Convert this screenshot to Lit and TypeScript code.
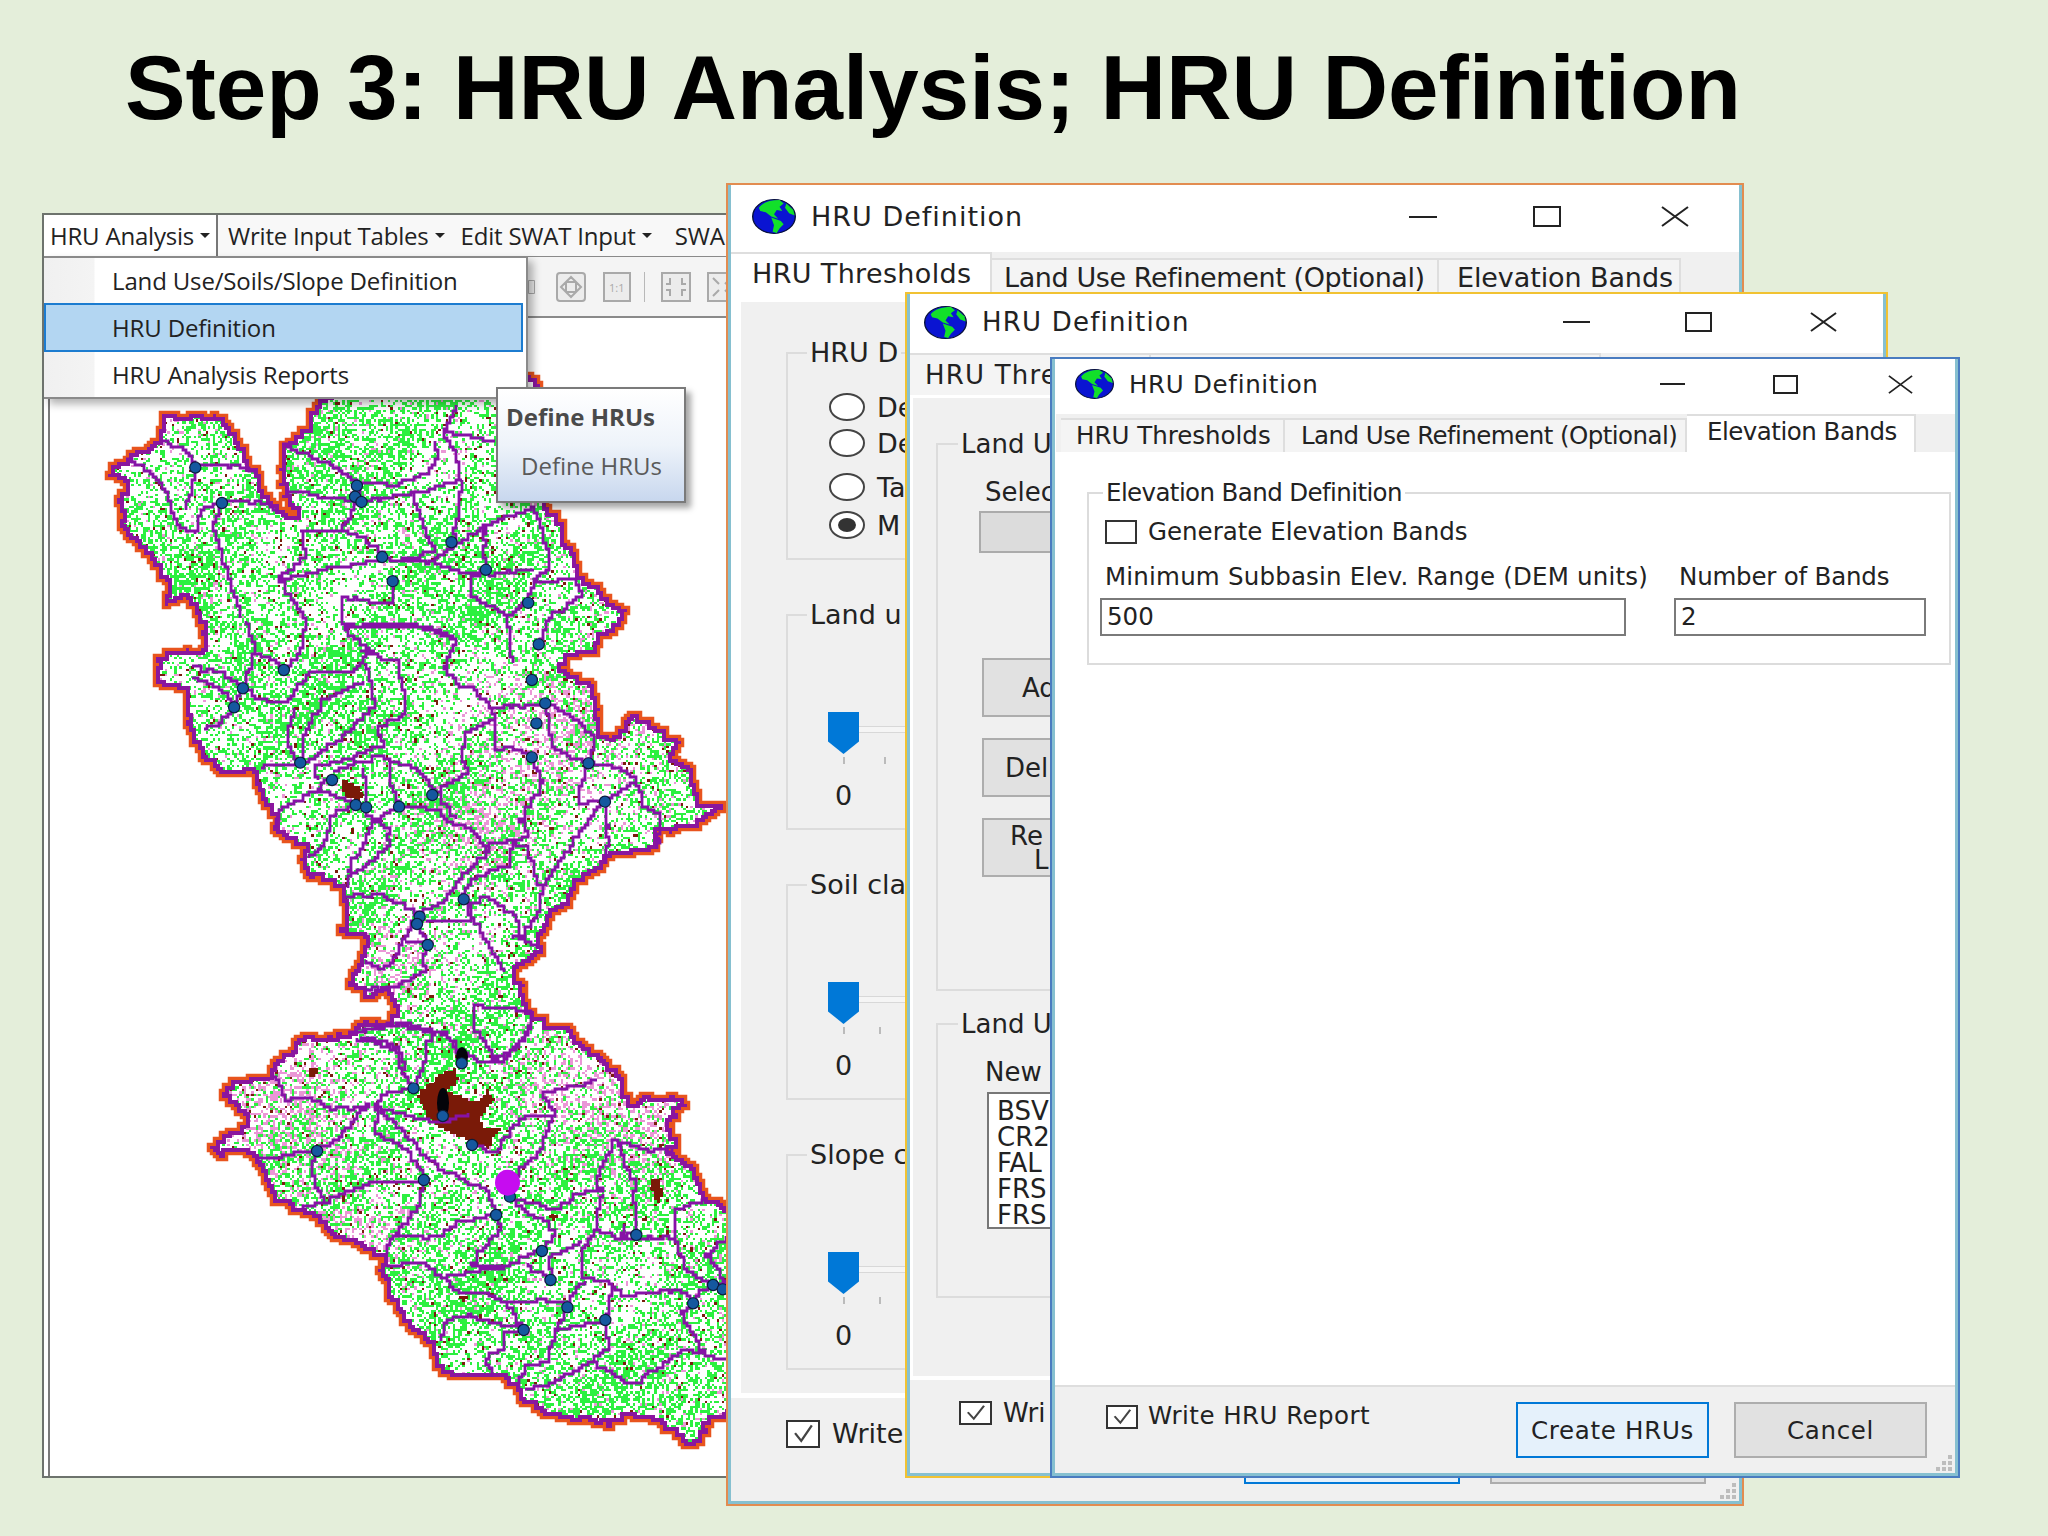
import { LitElement, html, css, svg } from 'lit';
import { customElement } from 'lit/decorators.js';

// map data was traced in three differently scaled crops: [originX, originY, scaleX, scaleY]
type Frame = [number, number, number, number];
const F1: Frame = [30, 180, 2.178, 2.904];
const F6: Frame = [200, 1020, 2.904, 3];
const F7: Frame = [130, 620, 2.613, 3];

const toPage = (f: Frame, flat: number[]) => {
  const out: number[][] = [];
  for (let i = 0; i < flat.length; i += 2) {
    out.push([f[0] + flat[i] / f[2], f[1] + flat[i + 1] / f[3]]);
  }
  return out;
};

let seed = 20483;
const rand = () => {
  seed = (seed + 0x6d2b79f5) | 0;
  let t = Math.imul(seed ^ (seed >>> 15), 1 | seed);
  t = (t + Math.imul(t ^ (t >>> 7), 61 | t)) ^ t;
  return ((t ^ (t >>> 14)) >>> 0) / 4294967296;
};

// raster-looking staircase line through the given points
const stair = (pts: number[][], g: number, jitter: number, close = false) => {
  const snap = (v: number) => Math.round(v / g) * g;
  let d = `M${snap(pts[0][0])} ${snap(pts[0][1])}`;
  const all = close ? [...pts, pts[0]] : pts;
  for (let i = 1; i < all.length; i++) {
    const [ax, ay] = all[i - 1];
    const [bx, by] = all[i];
    const n = Math.max(1, Math.ceil(Math.hypot(bx - ax, by - ay) / (g * 2)));
    for (let k = 1; k <= n; k++) {
      const t = k / n;
      const jx = k < n ? (rand() - 0.5) * jitter : 0;
      const jy = k < n ? (rand() - 0.5) * jitter : 0;
      d += `H${snap(ax + (bx - ax) * t + jx)}V${snap(ay + (by - ay) * t + jy)}`;
    }
  }
  return d + (close ? 'Z' : '');
};

const OUTLINE = [
  ...toPage(F1, [285, 680, 360, 680, 420, 690, 440, 730, 470, 810, 500, 860, 500, 900, 540, 960, 580, 975, 545, 880, 550, 770, 600, 720, 620, 650, 700, 560, 1090, 575, 1110, 600, 1125, 950, 1160, 1000, 1165, 1050, 1190, 1100, 1195, 1150, 1235, 1180, 1260, 1230, 1300, 1255]),
  ...toPage(F7, [1290, 0, 1270, 40, 1225, 60, 1220, 100, 1160, 110, 1130, 150, 1190, 185, 1215, 230, 1225, 330, 1250, 365, 1310, 280, 1380, 330, 1440, 370, 1420, 420, 1460, 440, 1480, 500, 1490, 550, 1550, 550, 1550, 570, 1490, 620, 1420, 640, 1380, 630, 1380, 690, 1260, 710, 1240, 735, 1170, 790, 1150, 860, 1110, 880, 1080, 950, 1080, 1000, 1010, 1060, 1035, 1130, 1040, 1170, 1090, 1215, 1150, 1230, 1190, 1280]),
  ...toPage(F6, [1180, 130, 1220, 170, 1250, 250, 1300, 225, 1390, 230, 1410, 260, 1360, 320, 1390, 375, 1360, 400, 1430, 440, 1470, 530, 1530, 570, 1600, 570, 1600, 1180, 1530, 1185, 1490, 1200, 1440, 1275, 1400, 1260, 1340, 1210, 1240, 1190, 1200, 1220, 1130, 1200, 1040, 1190, 990, 1170, 930, 1130, 920, 1100, 850, 1070, 750, 1070, 690, 1040, 660, 960, 600, 915, 590, 880, 550, 840, 540, 780, 515, 745, 530, 710, 450, 670, 380, 640, 340, 590, 270, 575, 210, 520, 175, 440, 120, 390, 70, 410, 25, 375, 60, 340, 130, 320, 135, 290, 60, 215, 90, 180, 175, 170, 205, 180, 205, 140, 260, 90, 280, 50, 430, 40, 460, 10, 540, 5]),
  ...toPage(F7, [680, 1200, 695, 1160, 670, 1110, 620, 1140, 570, 1080, 600, 1010, 620, 960, 550, 930, 560, 870, 555, 800, 460, 760, 445, 710, 460, 680, 380, 630, 365, 620, 380, 590, 350, 540, 330, 480, 320, 450, 240, 465, 185, 390, 155, 320, 145, 210, 80, 195, 65, 140, 90, 90, 185, 85, 195, 50, 180, 0]),
  ...toPage(F1, [340, 1210, 300, 1240, 300, 1170, 260, 1090, 210, 1020, 190, 920, 210, 880, 180, 860, 175, 830, 240, 780, 290, 740]),
];

const LINES: [Frame, number[]][] = [
  [F1, [285, 760, 340, 790, 360, 830, 440, 830, 490, 850]],
  [F1, [210, 810, 260, 850, 300, 920, 320, 1000, 360, 1030, 370, 960, 420, 930, 500, 940, 540, 960]],
  [F1, [350, 800, 360, 870, 340, 960]],
  [F1, [420, 930, 400, 1020, 430, 1140, 460, 1270]],
  [F1, [550, 770, 640, 820, 710, 880, 720, 930, 680, 1020, 720, 1040, 770, 1090]],
  [F1, [555, 900, 640, 920, 720, 935, 830, 910, 940, 870, 930, 800, 900, 730, 930, 650]],
  [F1, [710, 880, 790, 885, 860, 850, 890, 800, 880, 760]],
  [F1, [830, 910, 860, 1020, 880, 1080, 800, 1110]],
  [F1, [590, 1020, 600, 1100, 540, 1160, 570, 1220, 600, 1280]],
  [F1, [680, 1020, 590, 1020]],
  [F1, [540, 1160, 640, 1130, 770, 1100, 870, 1110, 920, 1060, 940, 870]],
  [F1, [920, 1060, 990, 1000, 1090, 950, 1120, 1040, 1130, 1130, 1100, 1170, 1085, 1230, 1040, 1270, 1050, 1400]],
  [F1, [990, 1000, 990, 1130, 960, 1150, 960, 1210, 1040, 1270]],
  [F1, [870, 1110, 960, 1150, 1100, 1130]],
  [F1, [1100, 1170, 1190, 1160, 1200, 1210, 1130, 1280, 1110, 1350]],
  [F1, [790, 1165, 790, 1230, 680, 1210, 680, 1290, 770, 1300, 860, 1300, 930, 1340]],
  [F1, [900, 730, 1010, 760]],
  [F7, [300, 0, 330, 100, 400, 150, 440, 100, 460, 0]],
  [F7, [160, 140, 230, 160, 295, 205, 330, 240, 400, 250, 470, 155, 580, 160, 600, 130, 620, 100, 700, 130, 720, 280, 650, 330, 660, 380, 540, 430, 480, 440, 490, 480]],
  [F7, [295, 205, 270, 270, 230, 315, 190, 325]],
  [F7, [340, 440, 445, 430, 410, 350, 430, 260]],
  [F7, [445, 430, 460, 330, 500, 240, 610, 180]],
  [F7, [445, 430, 540, 360, 640, 250, 620, 130]],
  [F7, [165, 170, 240, 215, 270, 260]],
  [F7, [330, 100, 295, 205]],
  [F7, [600, 90, 640, 95, 560, 20, 740, 10, 850, 65, 820, 150, 860, 200, 900, 210, 940, 260, 1020, 260]],
  [F7, [940, 260, 950, 300, 880, 340, 870, 430, 880, 460, 800, 520]],
  [F7, [950, 300, 950, 390, 990, 380, 1050, 410, 1080, 490, 1020, 610, 1040, 650, 950, 670, 920, 700]],
  [F7, [1020, 260, 1085, 250, 1150, 290, 1215, 360, 1200, 430]],
  [F7, [1085, 250, 1100, 380, 1140, 410, 1200, 430, 1280, 450, 1320, 480, 1340, 560, 1385, 590, 1380, 690]],
  [F7, [1200, 430, 1170, 550, 1240, 545, 1320, 480]],
  [F7, [1240, 545, 1250, 680, 1240, 735]],
  [F7, [1240, 545, 1170, 650, 1080, 810, 1040, 680, 1000, 670, 990, 740, 900, 780, 870, 830]],
  [F7, [1080, 810, 1070, 880, 1020, 960, 1060, 980]],
  [F7, [1000, 960, 1020, 900, 940, 830, 880, 860, 980, 1060]],
  [F7, [880, 860, 890, 900, 770, 905]],
  [F7, [520, 480, 490, 515, 400, 570, 380, 620]],
  [F7, [590, 555, 530, 590, 510, 680, 470, 715]],
  [F7, [490, 515, 590, 555, 640, 610, 680, 630, 675, 690, 580, 770, 570, 800]],
  [F7, [640, 610, 570, 760]],
  [F7, [530, 450, 650, 410, 750, 450, 800, 520, 850, 600]],
  [F7, [680, 420, 680, 500, 705, 560, 800, 570, 830, 610, 890, 630, 940, 700, 880, 760, 850, 800, 820, 850, 750, 890]],
  [F7, [610, 440, 620, 560]],
  [F7, [705, 560, 640, 610]],
  [F7, [560, 830, 650, 820, 750, 890, 720, 960, 690, 1030, 660, 1050, 620, 1020]],
  [F7, [750, 890, 770, 970, 770, 1060, 700, 1100, 620, 1110]],
  [F7, [720, 965, 780, 970]],
  [F7, [1040, 1170, 900, 1160, 900, 1240, 960, 1320]],
  [F7, [1040, 1170, 1050, 1220, 1010, 1290, 930, 1330]],
  [F7, [570, 1240, 720, 1210, 830, 1250, 860, 1310]],
  [F7, [600, 1250, 700, 1280, 720, 1350]],
  [F6, [430, 40, 540, 10, 700, 40, 660, 70, 650, 140, 620, 205, 580, 130, 570, 90, 460, 55]],
  [F6, [700, 40, 760, 100, 820, 130, 880, 120, 960, 20]],
  [F6, [620, 205, 530, 225, 510, 270, 510, 340, 600, 395, 650, 480]],
  [F6, [510, 260, 610, 290, 680, 310, 780, 280]],
  [F6, [215, 170, 250, 240, 310, 230, 380, 270, 490, 255, 400, 360, 340, 395, 170, 420]],
  [F6, [340, 395, 325, 470, 360, 545, 300, 570]],
  [F6, [360, 545, 420, 515, 490, 490, 650, 480, 640, 560, 560, 660, 540, 700]],
  [F6, [560, 650, 680, 650, 760, 600, 860, 585]],
  [F6, [510, 260, 690, 450, 830, 510, 860, 585]],
  [F6, [790, 375, 860, 400, 900, 320, 940, 285, 1030, 290, 1000, 220, 1150, 180]],
  [F6, [1030, 290, 990, 400, 930, 460, 900, 530]],
  [F6, [900, 530, 940, 580, 1010, 610, 1030, 650, 1000, 690, 900, 735, 790, 740]],
  [F6, [900, 530, 1020, 570, 1100, 520, 1170, 510, 1150, 470, 1200, 360, 1290, 390, 1370, 390]],
  [F6, [1210, 360, 1230, 440, 1270, 500, 1260, 530, 1270, 640, 1220, 650, 1230, 610]],
  [F6, [1170, 520, 1150, 630, 1220, 660, 1380, 650, 1380, 570, 1470, 530]],
  [F6, [1380, 650, 1410, 760, 1490, 795, 1430, 850, 1400, 880, 1410, 920, 1470, 1010]],
  [F6, [1490, 795, 1530, 780, 1470, 700, 1530, 650]],
  [F6, [1150, 630, 1110, 700, 1110, 770, 1200, 800, 1220, 825, 1390, 810, 1430, 850]],
  [F6, [1110, 670, 1010, 720, 1020, 780]],
  [F6, [860, 585, 870, 630, 790, 740]],
  [F6, [540, 735, 640, 730, 700, 770, 880, 740]],
  [F6, [700, 770, 750, 820, 830, 820, 890, 850, 990, 840, 1070, 860]],
  [F6, [1120, 780, 1070, 860, 1040, 930, 1010, 1030, 940, 1040, 930, 1110]],
  [F6, [1200, 800, 1180, 900, 1120, 915, 1040, 935]],
  [F6, [1180, 900, 1185, 990, 1140, 1030, 1000, 1100, 940, 1110]],
  [F6, [1140, 1030, 1250, 1090, 1320, 1050, 1400, 990, 1530, 1020]],
  [F6, [890, 850, 940, 930, 885, 940, 880, 990, 830, 1020, 850, 1070]],
  [F6, [940, 930, 790, 885, 720, 900, 700, 960]],
  [F6, [1020, 780, 950, 730]],
];

const OUTLETS = [
  ...toPage(F1, [360, 835, 418, 938, 712, 888, 708, 920, 722, 935, 918, 1052, 767, 1095, 790, 1165, 993, 1132, 1085, 1228]),
  ...toPage(F7, [1068, 73, 402, 150, 295, 205, 272, 262, 1050, 180, 1085, 250, 1062, 310, 1050, 412, 1198, 430, 445, 428, 528, 480, 590, 555, 617, 562, 703, 560, 790, 525, 1241, 545, 872, 838, 757, 890, 750, 912, 778, 975]),
  ...toPage(F6, [760, 130, 620, 205, 705, 288, 790, 375, 340, 393, 650, 480, 900, 530, 860, 585, 993, 693, 1018, 780, 1067, 862, 1177, 900, 940, 930, 1267, 645, 1432, 850, 1490, 795, 1518, 808]),
];

const BROWN = [
  toPage(F6, [630, 225, 690, 160, 740, 140, 750, 180, 720, 220, 800, 240, 830, 210, 860, 240, 820, 290, 820, 320, 870, 330, 840, 385, 790, 365, 740, 345, 680, 310]),
  toPage(F6, [320, 145, 345, 140, 345, 165, 330, 175]),
  toPage(F6, [1310, 480, 1335, 490, 1340, 545, 1320, 545]),
  toPage(F6, [1015, 585, 1040, 590, 1035, 605]),
  toPage(F6, [755, 830, 785, 825, 770, 845]),
  toPage(F7, [555, 480, 570, 490, 610, 520, 600, 540, 570, 530, 555, 500]),
  toPage(F7, [575, 625, 595, 635, 580, 650]),
];

// speckled land cover, one unit = one map pixel
const CELL = 2.4;
const ORIGIN = [100, 400];
const bump = (x: number, y: number, cx: number, cy: number, r: number) =>
  Math.exp(-((x - cx) ** 2 + (y - cy) ** 2) / (r * r));

const buildSpeckle = () => {
  let green = '';
  let pink = '';
  let brown = '';
  for (let gy = 0; gy < 445; gy++) {
    for (let gx = 0; gx < 270; gx++) {
      const x = ORIGIN[0] + gx * CELL;
      const y = ORIGIN[1] + gy * CELL;
      const n = Math.sin(x * 0.021 + 1.3) * Math.cos(y * 0.027) + 0.5 * Math.sin(x * 0.061 + y * 0.047);
      const pinkAmt =
        0.04 +
        0.3 * bump(x, y, 560, 730, 70) +
        0.28 * bump(x, y, 470, 830, 50) +
        0.34 * bump(x, y, 285, 1110, 70) +
        0.28 * bump(x, y, 560, 1080, 50) +
        0.28 * bump(x, y, 640, 1130, 50) +
        0.2 * bump(x, y, 350, 1240, 50) +
        0.28 * bump(x, y, 400, 960, 40);
      const greenAmt = Math.max(0.14, 0.42 + 0.17 * n - pinkAmt * 0.8);
      const r = rand();
      const cell = `M${gx} ${gy}h1v1h-1z`;
      if (r < 0.025) brown += cell;
      else if (r < 0.025 + pinkAmt) pink += cell;
      else if (r < 0.025 + pinkAmt + greenAmt) green += cell;
    }
  }
  return { green, pink, brown };
};

const SPECKLE = buildSpeckle();
const OUTLINE_D = stair(OUTLINE, 3, 5, true);
const LINES_D = LINES.map(([f, pts]) => stair(toPage(f, pts), 3, 2.5)).join('');

@customElement('swat-map')
export class SwatMap extends LitElement {
  static styles = css`
    :host {
      display: block;
    }
    svg {
      display: block;
      width: 680px;
      height: 1158px;
      filter: blur(0.5px);
    }
  `;

  protected render() {
    const [cx, cy] = toPage(F6, [893, 488])[0];
    return html`
      <svg viewBox="50 318 680 1158">
        <defs>
          <clipPath id="basin"><path d=${OUTLINE_D}></path></clipPath>
        </defs>
        <path d=${OUTLINE_D} fill="none" stroke="#e8541e" stroke-width="6.5"></path>
        <path d=${OUTLINE_D} fill="#fff"></path>
        <g clip-path="url(#basin)">
          <g transform="translate(${ORIGIN[0]} ${ORIGIN[1]}) scale(${CELL})" shape-rendering="crispEdges">
            <path d=${SPECKLE.green} fill="#2cf040"></path>
            <path d=${SPECKLE.pink} fill="#ea96d6"></path>
            <path d=${SPECKLE.brown} fill="#7a1c0c"></path>
          </g>
          ${BROWN.map(
            (b) => svg`<path d=${stair(b, 3, 3, true)} fill="#7a1a08"></path>`,
          )}
          <path d=${OUTLINE_D} fill="none" stroke="#8a169e" stroke-width="8"></path>
        </g>
        <path d=${LINES_D} fill="none" stroke="#8612a6" stroke-width="2.8"></path>
        ${[[443, 1103, 6, 15], [462, 1057, 6, 10]].map(
          ([x, y, rx, ry]) => svg`<ellipse cx=${x} cy=${y} rx=${rx} ry=${ry} fill="#04040a"></ellipse>`,
        )}
        ${OUTLETS.map(
          ([x, y]) => svg`<circle cx=${x} cy=${y} r="5.6" fill="#15589f" stroke="#0c1d3d" stroke-width="1.2"></circle>`,
        )}
        <ellipse cx=${cx} cy=${cy} rx="12.5" ry="13" fill="#c60cf0"></ellipse>
      </svg>
    `;
  }
}

const globe = html`
  <svg class="globe" viewBox="0 0 32 32" preserveAspectRatio="none">
    <circle cx="16" cy="16" r="15.5" fill="#0a14d2" stroke="#07103a" stroke-width="1"></circle>
    <path d="M5 8C8 3 13 1 20 1L23 4 20 7 22 11 18 10 16 14 19 18 14 16 10 12 6 11Z" fill="#12e02a"></path>
    <path d="M14 17L21 20 23 23 20 27 18 31 15 30 16 24Z" fill="#12e02a"></path>
    <path d="M25 4L30 10 31 15 27 13 24 8Z" fill="#12e02a"></path>
  </svg>
`;

const controls = html`
  <div class="controls">
    <span class="ctl-min"></span>
    <span class="ctl-max"></span>
    <svg class="ctl-close" viewBox="0 0 28 22" preserveAspectRatio="none">
      <path d="M1 1L27 21M27 1L1 21" stroke="#222" stroke-width="2" fill="none"></path>
    </svg>
  </div>
`;

const grip = html`
  <svg class="grip" viewBox="0 0 24 18">
    <g fill="#bdbdbd">
      <rect x="18" y="0" width="4" height="4"></rect>
      <rect x="18" y="6" width="4" height="4"></rect>
      <rect x="12" y="6" width="4" height="4"></rect>
      <rect x="18" y="12" width="4" height="4"></rect>
      <rect x="12" y="12" width="4" height="4"></rect>
      <rect x="6" y="12" width="4" height="4"></rect>
    </g>
  </svg>
`;

const check = (on: boolean) => html`
  <span class="check">
    ${on
      ? html`<svg viewBox="0 0 34 28" preserveAspectRatio="none">
          <path d="M8 13L15 22 27 4" stroke="#444" stroke-width="2.6" fill="none"></path>
        </svg>`
      : ''}
  </span>
`;

const sliderGroup = (legend: string, tick2: number) => html`
  <div class="group slider-group">
    <span class="legend">${legend}</span>
    <div class="slider">
      <span class="thumb"></span>
      <span class="track"></span>
    </div>
    <div class="ticks" style="gap:${tick2}px"><i></i><i></i></div>
    <div class="zero">0</div>
  </div>
`;

const radio = (label: string, cls: string, on = false) => html`
  <div class="radio-row ${cls}">
    <span class="radio ${on ? 'on' : ''}"></span>
    <span>${label}</span>
  </div>
`;

const toolIcon = (inner: unknown, cls = '') => html`
  <svg class="tool ${cls}" viewBox="0 0 30 30" fill="#ececec" stroke="#a9a9a9" stroke-width="2">${inner}</svg>
`;

@customElement('app-root')
export class AppRoot extends LitElement {
  static styles = css`
    :host {
      display: block;
      width: 2048px;
      height: 1536px;
      overflow: hidden;
    }
    .stage {
      position: relative;
      width: 2048px;
      height: 1536px;
      box-sizing: border-box;
      padding: 35px 0 0 125px;
      background: #e4eeda;
      font-family: 'DejaVu Sans', sans-serif;
      color: #222;
    }
    h1 {
      margin: 0;
      font: bold 90.8px/106px 'Liberation Sans', Arial, sans-serif;
      color: #000;
      white-space: nowrap;
    }

    /* ArcSWAT main window */
    .app {
      position: absolute;
      left: 42px;
      top: 213px;
      width: 700px;
      height: 1265px;
      box-sizing: border-box;
      border: 2px solid #6d736d;
      border-right: 0;
      background: #fff;
      display: flex;
      flex-direction: column;
      font-family: 'Open Sans', sans-serif;
      font-size: 24px;
      overflow: hidden;
    }
    .menubar {
      height: 41px;
      display: flex;
      align-items: center;
      background: #f8f8f8;
      white-space: nowrap;
      letter-spacing: -0.2px;
    }
    .mi {
      display: flex;
      align-items: center;
      gap: 6px;
      margin-left: 16px;
    }
    .mi.active {
      margin: 0;
      width: 174px;
      height: 41px;
      box-sizing: border-box;
      padding-left: 6px;
      background: #fff;
      border-right: 2px solid #777;
    }
    .mi.last {
      margin-left: 23px;
    }
    .caret {
      width: 0;
      height: 0;
      border: 5px solid transparent;
      border-top-color: #222;
      border-bottom: 0;
    }
    .toolbar {
      height: 62px;
      box-sizing: border-box;
      display: flex;
      align-items: center;
      padding-left: 484px;
      background: #f4f4f4;
      border-top: 1px solid #8a8a8a;
      border-bottom: 2px solid #8a8a8a;
    }
    .tool {
      width: 30px;
      height: 30px;
      flex: none;
      margin-right: 16px;
    }
    .tool text {
      font: 11px 'Open Sans', sans-serif;
      fill: #a9a9a9;
      stroke: none;
    }
    .tool.cut {
      width: 15px;
      margin-right: 13px;
    }
    .sep {
      width: 1px;
      height: 30px;
      flex: none;
      margin-right: 16px;
      margin-left: -4px;
      background: #b8b8b8;
    }
    .canvas {
      flex: 1;
      border-left: 2px solid #7a7a7a;
      margin-left: 4px;
      overflow: hidden;
    }
    .menu {
      position: absolute;
      left: 0;
      top: 41px;
      width: 484px;
      height: 143px;
      box-sizing: border-box;
      border: 2px solid #8a8a8a;
      border-left: 0;
      background: #fff;
      box-shadow: 5px 5px 8px rgba(0, 0, 0, 0.3);
      display: flex;
      flex-direction: column;
      letter-spacing: -0.15px;
    }
    .menu div {
      flex: 1;
      display: flex;
      align-items: center;
      padding-left: 68px;
      background: linear-gradient(90deg, #f0f0f0, #f4f4f4 50px, #fff 51px);
    }
    .menu .sel {
      margin-right: 3px;
      border: 2px solid #1c7cd0;
      padding-left: 66px;
      background: #b3d6f2;
    }
    .tip {
      position: absolute;
      left: 452px;
      top: 172px;
      width: 190px;
      height: 116px;
      box-sizing: border-box;
      border: 2px solid #7a7a7a;
      padding: 8px 0 0 8px;
      background: linear-gradient(#fff, #eef3fa 50%, #c8d7ee);
      box-shadow: 5px 5px 6px rgba(0, 0, 0, 0.35);
      color: #4a4a4a;
      white-space: nowrap;
    }
    .tip b {
      display: block;
      line-height: 40px;
    }
    .tip span {
      display: block;
      margin: 9px 0 0 15px;
      line-height: 40px;
      color: #5a5a5a;
    }

    /* dialogs */
    .win {
      position: absolute;
      box-sizing: border-box;
      border: 2px solid var(--edge);
      background: #fff;
      display: flex;
      flex-direction: column;
      white-space: nowrap;
      overflow: hidden;
      font-size: var(--fs);
    }
    .win1 {
      left: 726px;
      top: 183px;
      width: 1018px;
      height: 1323px;
      --edge: #e28c50;
      --fs: 27px;
      --ls: 1px;
    }
    .win2 {
      left: 905px;
      top: 292px;
      width: 983px;
      height: 1186px;
      --edge: #f1c232;
      --fs: 26px;
      --ls: 1.2px;
    }
    .win3 {
      left: 1050px;
      top: 357px;
      width: 910px;
      height: 1121px;
      --edge: #4a7cc0;
      --fs: 24.5px;
      --ls: 0.7px;
    }
    .inner {
      flex: 1;
      min-height: 0;
      display: flex;
      flex-direction: column;
      border: 3px solid #86c0d0;
      border-top: 0;
    }
    .titlebar {
      flex: none;
      box-sizing: border-box;
      display: flex;
      align-items: center;
      background: #fff;
    }
    .caption {
      letter-spacing: var(--ls);
    }
    .win1 .titlebar {
      height: 67px;
      padding: 0 50px 4px 21px;
      gap: 15px;
    }
    .win2 .titlebar {
      height: 59px;
      padding: 0 46px 3px 14px;
      gap: 15px;
    }
    .win3 .titlebar {
      height: 55px;
      padding: 0 42px 5px 20px;
      gap: 15px;
    }
    .globe {
      flex: none;
    }
    .win1 .globe {
      width: 44px;
      height: 35px;
    }
    .win2 .globe {
      width: 43px;
      height: 33px;
    }
    .win3 .globe {
      width: 39px;
      height: 30px;
    }
    .controls {
      margin-left: auto;
      display: flex;
      align-items: center;
    }
    .controls > * {
      display: block;
      box-sizing: border-box;
      width: var(--cw);
      flex: none;
    }
    .win1 .controls {
      --cw: 28px;
      --ch: 21px;
      gap: 96px;
    }
    .win1 .ctl-close {
      margin-left: 4px;
    }
    .win2 .controls {
      --cw: 27px;
      --ch: 20px;
      gap: 95px;
    }
    .win2 .ctl-close {
      margin-left: 3px;
    }
    .win3 .controls {
      --cw: 25px;
      --ch: 19px;
      gap: 88px;
    }
    .win3 .ctl-close {
      margin-left: 2px;
    }
    .ctl-min {
      height: 2px;
      background: #222;
    }
    .ctl-max {
      height: var(--ch);
      border: 2px solid #222;
    }
    .ctl-close {
      height: var(--ch);
    }

    .tabs {
      flex: none;
      display: flex;
      align-items: flex-end;
      background: #f0f0f0;
    }
    .tab {
      box-sizing: border-box;
      background: #f4f4f4;
      border: 2px solid #dedede;
      border-bottom: 0;
      border-left-width: 0;
      display: flex;
      align-items: center;
      overflow: hidden;
    }
    .tab.active {
      background: #fff;
      align-self: stretch;
    }
    .win1 .tabs {
      height: 46px;
    }
    .win1 .tab {
      height: 40px;
      padding-bottom: 4px;
    }
    .win1 .tab.active {
      height: auto;
      width: 261px;
      padding: 0 0 6px 21px;
      letter-spacing: 0.35px;
    }
    .win1 .t2 {
      width: 447px;
      padding-left: 12px;
      letter-spacing: -0.4px;
    }
    .win1 .t3 {
      width: 242px;
      padding-left: 18px;
      letter-spacing: -0.1px;
    }
    .win2 .tabs {
      height: 42px;
    }
    .win2 .t1 {
      height: 42px;
      width: 241px;
      padding-left: 15px;
      letter-spacing: 1.2px;
    }
    .win2 .t2 {
      height: 42px;
      width: 450px;
    }
    .win3 .tabs {
      height: 38px;
      margin-left: 1px;
      padding-left: 5px;
    }
    .win3 .tab {
      height: 34px;
      padding-bottom: 2px;
    }
    .win3 .t1 {
      width: 224px;
      padding-left: 15px;
    }
    .win3 .t2 {
      width: 402px;
      padding-left: 16px;
      letter-spacing: -0.55px;
    }
    .win3 .tab.active {
      width: 229px;
      height: 39px;
      margin-bottom: -1px;
      padding: 0 0 6px 20px;
      align-self: flex-end;
      letter-spacing: -0.5px;
    }

    .panel {
      background: #f0f0f0;
      overflow: hidden;
      display: flex;
      flex-direction: column;
      align-items: flex-start;
    }
    .win1 .panel {
      height: 1091px;
      margin: 4px 0 5px 10px;
      padding: 50px 0 0 45px;
      gap: 54px;
      box-sizing: border-box;
    }
    .win2 .panel {
      height: 978px;
      margin: 3px 0 4px 3px;
      padding: 45px 0 0 23px;
      gap: 32px;
      box-sizing: border-box;
    }
    .win3 .panel {
      flex: 1;
      background: #fff;
      padding: 40px 4px 0 32px;
      box-sizing: border-box;
    }
    .group {
      box-sizing: border-box;
      border: 2px solid #dcdcdc;
      display: flex;
      flex-direction: column;
      align-items: flex-start;
      flex: none;
    }
    .legend {
      padding: 0 3px;
      line-height: 36px;
      background: #f0f0f0;
      margin-top: -19px;
    }
    .win1 .legend {
      margin-left: -21px;
    }
    .win2 .legend {
      margin-left: -27px;
    }
    .win3 .legend {
      background: #fff;
      margin-left: -2px;
      letter-spacing: -0.6px;
    }

    .win1 .group {
      width: 900px;
      padding-left: 40px;
    }
    .radio-group {
      height: 208px;
    }
    .slider-group {
      height: 216px;
    }
    .radios {
      margin: 22px 0 0 1px;
    }
    .radio-row {
      height: 28px;
      display: flex;
      align-items: center;
      gap: 12px;
    }
    .radio-row.g36 {
      margin-top: 8px;
    }
    .radio-row.g44 {
      margin-top: 16px;
    }
    .radio-row.g38 {
      margin-top: 10px;
    }
    .radio {
      box-sizing: border-box;
      width: 36px;
      height: 28px;
      flex: none;
      border: 2px solid #444;
      border-radius: 50%;
      background: #fff;
      display: flex;
      align-items: center;
      justify-content: center;
    }
    .radio.on::after {
      content: '';
      width: 18px;
      height: 14px;
      border-radius: 50%;
      background: #333;
    }
    .slider {
      margin-top: 79px;
      display: flex;
      align-items: flex-start;
      width: 500px;
    }
    .thumb {
      width: 31px;
      height: 42px;
      flex: none;
      background: #0078d7;
      clip-path: polygon(0 0, 100% 0, 100% 70%, 50% 100%, 0 70%);
    }
    .track {
      flex: 1;
      height: 7px;
      margin-top: 14px;
      box-sizing: border-box;
      border: 1px solid #d8d8d8;
      border-left: 0;
      background: #f5f5f5;
    }
    .ticks {
      display: flex;
      margin: 3px 0 0 15px;
    }
    .ticks i {
      width: 2px;
      height: 7px;
      background: #bbb;
    }
    .zero {
      width: 31px;
      margin-top: 14px;
      line-height: 36px;
      text-align: center;
    }

    .win2 .group {
      width: 880px;
      padding-left: 47px;
    }
    .land-group {
      height: 548px;
    }
    .new-group {
      height: 275px;
    }
    .field-label {
      line-height: 30px;
      margin-top: 15px;
    }
    .selectbox {
      box-sizing: border-box;
      width: 400px;
      height: 42px;
      margin: 4px 0 0 -6px;
      background: #dcdcdc;
      border: 2px solid #ababab;
    }
    .btn-stack {
      margin: 105px 0 0 -3px;
      display: flex;
      flex-direction: column;
      gap: 21px;
    }
    .btn {
      box-sizing: border-box;
      width: 200px;
      height: 59px;
      background: #e1e1e1;
      border: 2px solid #adadad;
      display: flex;
      flex-direction: column;
      align-items: flex-start;
      justify-content: center;
      line-height: 24px;
    }
    .btn span:first-child {
      margin-left: var(--tx);
    }
    .listbox {
      box-sizing: border-box;
      width: 300px;
      height: 137px;
      margin: 5px 0 0 2px;
      padding: 4px 0 0 8px;
      background: #fff;
      border: 2px solid #777;
      line-height: 26px;
    }

    .win3 .group {
      width: 864px;
      height: 173px;
      padding-left: 16px;
    }
    .gen-row {
      margin-top: 6px;
      display: flex;
      align-items: center;
      gap: 11px;
    }
    .elev-grid {
      margin: 16px 0 0 -5px;
      display: grid;
      grid-template-columns: 526px 252px;
      column-gap: 48px;
      row-gap: 6px;
    }
    .elev-grid label {
      line-height: 30px;
      padding-left: 5px;
      letter-spacing: 0.2px;
    }
    .elev-grid label + label {
      letter-spacing: -0.2px;
    }
    .input {
      box-sizing: border-box;
      height: 38px;
      border: 2px solid #7a7a7a;
      padding-left: 5px;
      line-height: 34px;
      background: #fff;
    }

    .footer {
      flex: 1;
      min-height: 0;
      position: relative;
      background: #f0f0f0;
      display: flex;
      align-items: flex-start;
    }
    .win1 .footer {
      padding: 22px 33px 0 55px;
      gap: 12px;
    }
    .win1 .check {
      width: 34px;
      height: 28px;
    }
    .win2 .footer {
      padding: 21px 0 0 49px;
      gap: 11px;
    }
    .win2 .check {
      width: 33px;
      height: 24px;
    }
    .win3 .footer {
      padding: 18px 28px 0 51px;
      gap: 10px;
      border-top: 2px solid #dedede;
      flex: none;
      height: 88px;
      box-sizing: border-box;
    }
    .win3 .check {
      width: 32px;
      height: 24px;
    }
    .check {
      box-sizing: border-box;
      flex: none;
      border: 2px solid #333;
      background: #fff;
      display: block;
    }
    .check svg {
      display: block;
      width: 100%;
      height: 100%;
    }
    .foot-text {
      line-height: 24px;
    }
    .win1 .foot-text {
      line-height: 28px;
    }
    .win3 .foot-text {
      margin-top: -1px;
      letter-spacing: 0.45px;
    }
    .foot-btns {
      margin-left: auto;
      display: flex;
    }
    .win1 .foot-btns {
      gap: 30px;
      margin-top: 8px;
    }
    .win3 .foot-btns {
      gap: 25px;
      margin-top: -3px;
      letter-spacing: 0.7px;
    }
    .push {
      box-sizing: border-box;
      height: 56px;
      background: #e1e1e1;
      border: 2px solid #adadad;
      display: flex;
      align-items: center;
      justify-content: center;
    }
    .win1 .push {
      width: 216px;
    }
    .win3 .push {
      width: 193px;
    }
    .push.primary {
      background: #e5f1fb;
      border-color: #0078d7;
    }
    .grip {
      position: absolute;
      right: 1px;
      bottom: 0;
      width: 24px;
      height: 18px;
    }
  `;

  protected render() {
    return html`
      <div class="stage">
        <h1>Step 3: HRU Analysis; HRU Definition</h1>

        <div class="app">
          <div class="menubar">
            <div class="mi active">HRU Analysis <span class="caret"></span></div>
            <div class="mi" style="margin-left:10px">Write Input Tables <span class="caret"></span></div>
            <div class="mi">Edit SWAT Input <span class="caret"></span></div>
            <div class="mi last">SWA</div>
          </div>
          <div class="toolbar">
            ${toolIcon(svg`<path d="M1 2H13V28H1Z"></path>`, 'cut')}
            ${toolIcon(svg`<rect x="1" y="1" width="28" height="28" rx="3"></rect><path d="M15 5L10 10H20ZM15 25L10 20H20ZM5 15L10 10V20ZM25 15L20 10V20Z"></path>`)}
            ${toolIcon(svg`<path d="M2 1H28V29H2Z"></path><text x="7" y="20">1:1</text>`)}
            <span class="sep"></span>
            ${toolIcon(svg`<rect x="1" y="1" width="28" height="28"></rect><path d="M9 6V12H5M21 6V12H25M9 24V18H5M21 24V18H25"></path>`)}
            ${toolIcon(svg`<rect x="1" y="1" width="28" height="28"></rect><path d="M6 6L12 12M24 6L18 12M6 24L12 18M24 24L18 18"></path>`)}
          </div>
          <div class="canvas"><swat-map></swat-map></div>

          <div class="menu">
            <div>Land Use/Soils/Slope Definition</div>
            <div class="sel">HRU Definition</div>
            <div>HRU Analysis Reports</div>
          </div>
          <div class="tip">
            <b>Define HRUs</b>
            <span>Define HRUs</span>
          </div>
        </div>

        <div class="win win1">
          <div class="inner">
            <div class="titlebar">${globe}<span class="caption">HRU Definition</span>${controls}</div>
            <div class="tabs">
              <div class="tab active">HRU Thresholds</div>
              <div class="tab t2">Land Use Refinement (Optional)</div>
              <div class="tab t3">Elevation Bands</div>
            </div>
            <div class="panel">
              <div class="group radio-group">
                <span class="legend">HRU D</span>
                <div class="radios">
                  ${radio('De', '')}
                  ${radio('De', 'g36')}
                  ${radio('Ta', 'g44')}
                  ${radio('M', 'g38', true)}
                </div>
              </div>
              ${sliderGroup('Land u', 39)}
              ${sliderGroup('Soil cla', 34)}
              ${sliderGroup('Slope c', 34)}
            </div>
            <div class="footer">
              ${check(true)}<span class="foot-text">Write</span>
              <div class="foot-btns">
                <div class="push primary"></div>
                <div class="push"></div>
              </div>
              ${grip}
            </div>
          </div>
        </div>

        <div class="win win2">
          <div class="inner">
            <div class="titlebar">${globe}<span class="caption">HRU Definition</span>${controls}</div>
            <div class="tabs">
              <div class="tab t1">HRU Thre</div>
              <div class="tab t2"></div>
            </div>
            <div class="panel">
              <div class="group land-group">
                <span class="legend">Land U</span>
                <div class="field-label">Selec</div>
                <div class="selectbox"></div>
                <div class="btn-stack">
                  <div class="btn" style="--tx:38px"><span>Ad</span></div>
                  <div class="btn" style="--tx:21px"><span>Del</span></div>
                  <div class="btn" style="--tx:26px"><span>Re</span><span style="margin-left:50px">L</span></div>
                </div>
              </div>
              <div class="group new-group">
                <span class="legend">Land U</span>
                <div class="field-label">New</div>
                <div class="listbox">BSV<br />CR2<br />FAL<br />FRS<br />FRS</div>
              </div>
            </div>
            <div class="footer">${check(true)}<span class="foot-text">Wri</span></div>
          </div>
        </div>

        <div class="win win3">
          <div class="inner">
            <div class="titlebar">${globe}<span class="caption">HRU Definition</span>${controls}</div>
            <div class="tabs">
              <div class="tab t1">HRU Thresholds</div>
              <div class="tab t2">Land Use Refinement (Optional)</div>
              <div class="tab active">Elevation Bands</div>
            </div>
            <div class="panel">
              <div class="group">
                <span class="legend">Elevation Band Definition</span>
                <div class="gen-row">${check(false)}<span>Generate Elevation Bands</span></div>
                <div class="elev-grid">
                  <label>Minimum Subbasin Elev. Range (DEM units)</label>
                  <label>Number of Bands</label>
                  <div class="input">500</div>
                  <div class="input">2</div>
                </div>
              </div>
            </div>
            <div class="footer">
              ${check(true)}<span class="foot-text">Write HRU Report</span>
              <div class="foot-btns">
                <div class="push primary">Create HRUs</div>
                <div class="push">Cancel</div>
              </div>
              ${grip}
            </div>
          </div>
        </div>
      </div>
    `;
  }
}

declare global {
  interface HTMLElementTagNameMap {
    'app-root': AppRoot;
    'swat-map': SwatMap;
  }
}
